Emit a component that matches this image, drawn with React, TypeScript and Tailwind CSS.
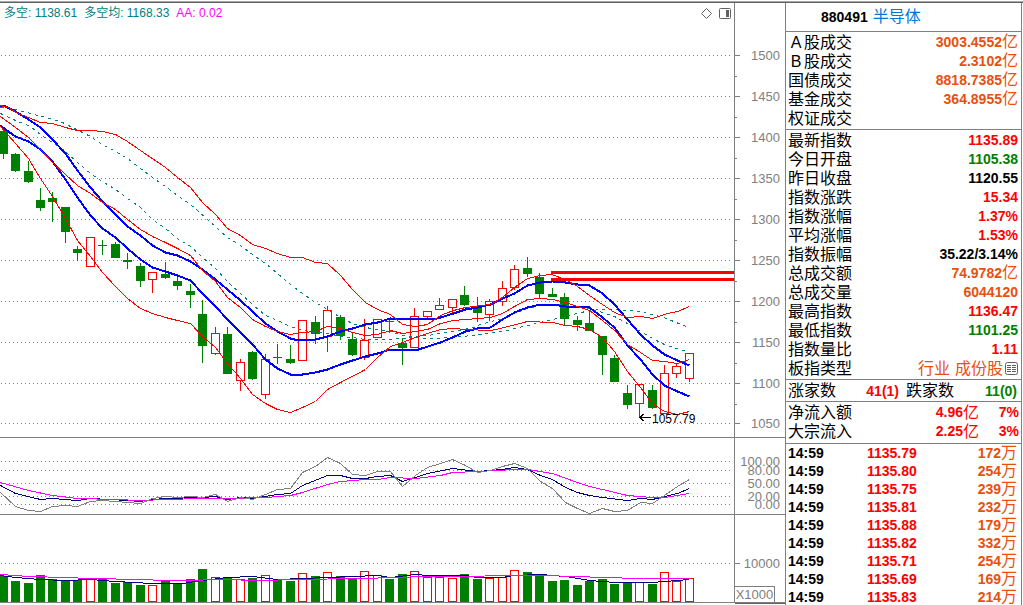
import React from 'react';

type Bar = [up: 0 | 1, high: number, top: number, bottom: number, low: number, volume: number];

// one entry per trading day, y positions on the chart
const bars: Bar[] = [
  [0, 128, 131, 154, 159, 576],
  [0, 153, 154, 171, 172, 581],
  [0, 161, 171, 182, 183, 583],
  [0, 188, 200, 208, 211, 575],
  [0, 192, 198, 202, 222, 579],
  [0, 207, 207, 232, 243, 580],
  [0, 246, 249, 253, 261, 580],
  [1, 237, 237, 267, 267, 579],
  [0, 240, 245, 246, 255, 579],
  [0, 242, 244, 258, 258, 583],
  [0, 253, 260, 262, 269, 582],
  [0, 263, 266, 281, 287, 585],
  [1, 272, 272, 280, 293, 585],
  [0, 262, 274, 278, 279, 580],
  [0, 277, 281, 286, 290, 583],
  [0, 284, 291, 295, 308, 579],
  [0, 300, 314, 346, 363, 569],
  [1, 327, 333, 354, 355, 577],
  [0, 327, 334, 374, 374, 578],
  [1, 359, 362, 381, 391, 579],
  [0, 351, 352, 379, 380, 578],
  [1, 354, 359, 395, 399, 575],
  [0, 344, 357, 358, 364, 580],
  [0, 345, 359, 363, 364, 581],
  [1, 320, 320, 361, 361, 573],
  [0, 316, 322, 334, 344, 576],
  [1, 306, 310, 337, 352, 572],
  [0, 315, 317, 336, 340, 576],
  [0, 333, 339, 355, 356, 579],
  [1, 319, 340, 358, 360, 571],
  [1, 319, 319, 338, 338, 575],
  [0, 319, 321, 322, 333, 579],
  [0, 338, 343, 348, 365, 574],
  [1, 308, 316, 348, 348, 571],
  [1, 311, 311, 317, 320, 577],
  [1, 298, 305, 310, 310, 577],
  [1, 299, 299, 308, 315, 578],
  [0, 286, 295, 305, 306, 574],
  [0, 297, 307, 313, 322, 579],
  [1, 299, 301, 315, 321, 578],
  [1, 281, 288, 302, 306, 577],
  [1, 265, 269, 288, 290, 570],
  [0, 257, 268, 274, 277, 572],
  [0, 273, 277, 294, 298, 576],
  [0, 288, 294, 297, 297, 581],
  [0, 293, 297, 319, 325, 580],
  [0, 316, 320, 325, 331, 585],
  [0, 310, 323, 331, 331, 581],
  [0, 336, 336, 355, 375, 579],
  [0, 355, 358, 382, 382, 584],
  [0, 385, 393, 405, 409, 583],
  [1, 384, 384, 404, 417, 582],
  [0, 385, 390, 408, 409, 584],
  [1, 365, 373, 414, 414, 572],
  [1, 363, 366, 374, 378, 581],
  [1, 353, 353, 379, 382, 578],
];

const barX = (i: number) => Math.floor(3.07 + i * 12.48);

const RED = '#ff0000';
const GREEN = '#008000';
const GRAY = '#808080';
const TEAL = '#008080';
const BLUE = '#0000ff';
const NAVY = '#000080';
const MAGENTA = '#ff00ff';

interface LineData {
  color: string;
  width?: number;
  dash?: string;
  points: string;
}

const priceLines: LineData[] = [
  {
    color: TEAL,
    dash: '3 4',
    points:
      '0,107 15,109 30,113 45,117 60,121 78,130 90,136 102,144 115,151 127,158 140,168 152,177 165,186 177,195 190,204 205,217 227,237 240,245 252,254 265,263 277,273 290,284 302,293 315,302 327,309 340,317 352,323 365,327 377,329 390,331 402,335 415,337 430,338 453,337 480,334 502,331 527,325 552,319 577,313 589,310 602,309 633,310 640,311 663,317 686,326',
  },
  {
    color: TEAL,
    dash: '3 4',
    points:
      '0,113 15,120 30,126 40,134 55,144 65,151 78,163 90,173 102,181 115,189 127,198 140,207 152,219 165,228 177,238 190,246 202,257 215,268 227,281 240,293 252,304 265,315 277,320 290,326 302,330 315,332 327,333 340,336 352,337 365,339 390,339 402,338 427,335 453,331 473,327 480,324 502,318 514,313 527,308 540,305 552,304 577,305 589,308 602,312 614,316 627,323 640,331 652,338 664,344 686,351',
  },
  {
    color: BLUE,
    width: 2,
    points:
      '0,105 5,106 15,111 28,119 40,127 52,139 65,153 77,170 90,187 102,201 115,214 127,226 140,235 152,245 165,252 177,255 190,261 202,269 215,279 227,289 240,300 252,311 265,323 277,331 290,338 298,340 315,339 327,336 340,331 352,328 365,324 377,322 390,318 433,319 440,317 453,313 465,309 477,307 490,304 500,299 514,293 527,285 540,282 552,281 565,282 577,284 589,285 602,293 614,304 627,319 640,334 652,345 664,354 677,360 689,365',
  },
  {
    color: BLUE,
    width: 2,
    points:
      '0,125 5,129 15,136 28,141 40,149 52,161 65,179 77,197 90,215 102,228 115,237 127,248 140,259 152,267 165,271 177,275 190,280 202,293 215,306 227,319 240,332 252,344 265,359 277,368 290,374 302,374 315,372 327,369 340,364 352,360 365,356 377,353 390,349 418,349 440,342 452,337 465,331 477,328 490,327 502,319 514,312 527,307 540,304 552,304 565,306 589,307 602,317 614,327 627,345 640,359 652,374 664,385 677,391 689,396',
  },
  {
    color: RED,
    points:
      '0,105 8,107 15,112 28,117 40,122 52,123 65,127 77,130 90,130 102,131 115,134 127,141 140,150 165,167 177,177 190,187 202,202 215,214 227,228 240,235 252,244 265,248 277,253 290,257 302,257 315,262 327,263 340,275 352,289 365,302 377,309 390,314 402,324 415,326 427,324 440,315 453,310 465,307 490,304 502,297 514,287 527,278 540,275 551,274 565,279 577,286 589,295 602,304 614,312 627,317 640,316 652,318 667,313 677,311 689,306',
  },
  {
    color: RED,
    points:
      '0,116 15,127 28,137 40,149 52,162 65,174 77,185 90,193 102,202 115,209 127,219 140,229 152,236 165,242 177,248 190,255 202,270 215,281 227,297 240,307 252,319 265,326 277,331 290,334 302,332 315,331 327,326 340,328 352,332 365,335 377,334 390,330 402,333 427,329 440,323 453,320 465,319 490,317 502,313 514,306 527,299 540,298 552,299 565,302 577,306 589,310 602,320 614,330 627,344 640,352 652,360 664,361 677,363 689,359',
  },
  {
    color: RED,
    points:
      '0,126 15,143 28,158 40,178 52,196 65,218 77,240 90,256 102,272 115,286 127,298 140,308 152,313 165,317 177,320 190,323 202,336 215,347 227,363 240,378 252,394 265,403 277,409 290,412 302,407 315,401 327,389 340,382 365,369 377,357 390,346 402,342 415,337 427,333 440,329 453,328 465,329 490,330 500,328 527,321 552,322 565,325 577,326 589,329 602,337 614,351 627,371 640,387 652,403 664,411 677,414 689,411',
  },
];

const indicatorLines: LineData[] = [
  {
    color: NAVY,
    points:
      '0,485 15,493 40,499 52,498 77,500 90,498 127,500 140,501 152,499 165,498 202,497 215,496 227,499 240,497 252,498 265,496 277,494 290,493 302,485 327,475 340,475 352,478 365,478 377,476 390,475 402,481 415,477 427,473 452,468 477,471 502,469 514,467 527,469 540,475 552,479 565,487 577,492 589,495 602,497 627,500 640,498 652,499 664,496 677,493 689,488',
  },
  {
    color: MAGENTA,
    points:
      '0,482 28,490 52,495 77,498 115,499 140,500 165,499 202,498 227,498 265,497 290,495 302,492 327,484 340,481 365,479 377,479 390,477 415,478 440,475 452,472 477,471 514,469 527,469 552,473 577,482 589,486 602,489 627,495 652,497 664,497 677,495 689,493',
  },
  {
    color: GRAY,
    points:
      '0,492 15,506 28,510 40,511 52,506 65,505 77,506 90,501 102,500 115,501 127,502 140,503 152,498 165,496 177,497 190,496 202,497 215,494 227,501 240,497 252,499 265,494 277,489 290,488 302,472 315,466 327,457 340,463 352,474 365,475 377,471 390,471 402,486 415,475 427,467 440,463 452,459 465,465 477,472 490,470 502,466 514,463 527,468 540,481 552,488 565,502 577,508 589,513 602,508 614,511 627,510 640,502 652,503 664,495 677,486 689,479',
  },
];

const volumeLines: LineData[] = [
  {
    color: NAVY,
    points:
      '0,575 15,577 40,579 65,580 90,579 115,581 152,583 182,583 202,580 227,577 252,576 277,579 302,578 327,577 352,576 377,575 390,577 415,574 427,575 465,575 477,577 502,577 514,575 540,574 565,576 577,578 589,580 602,581 614,582 652,582 664,581 689,579',
  },
  {
    color: MAGENTA,
    points:
      '0,574 28,576 65,577 90,578 140,579 165,580 190,580 215,579 265,580 290,579 365,578 390,577 430,576 540,575 577,576 602,577 640,578 689,578',
  },
];

const priceAxis = [
  { y: 55, label: '1500' },
  { y: 96, label: '1450' },
  { y: 137, label: '1400' },
  { y: 178, label: '1350' },
  { y: 219, label: '1300' },
  { y: 260, label: '1250' },
  { y: 301, label: '1200' },
  { y: 342, label: '1150' },
  { y: 383, label: '1100' },
  { y: 423, label: '1050' },
];

const indicatorAxis = [
  { y: 461, label: '100.00' },
  { y: 470, label: '80.00' },
  { y: 483, label: '50.00' },
  { y: 496, label: '20.00' },
  { y: 504, label: '0.00' },
];

const volumeAxis = [{ y: 563, label: '10000' }];

const turnover = [
  { label: 'A股成交', value: '3003.4552', unit: '亿', color: 'text-[#e8500c]' },
  { label: 'B股成交', value: '2.3102', unit: '亿', color: 'text-[#e8500c]' },
  { label: '国债成交', value: '8818.7385', unit: '亿', color: 'text-[#e8500c]' },
  { label: '基金成交', value: '364.8955', unit: '亿', color: 'text-[#e8500c]' },
  { label: '权证成交', value: '', unit: '', color: 'text-[#e8500c]' },
];

const quotes = [
  { label: '最新指数', value: '1135.89', unit: '', color: 'text-[#ff0000]' },
  { label: '今日开盘', value: '1105.38', unit: '', color: 'text-[#008000]' },
  { label: '昨日收盘', value: '1120.55', unit: '', color: 'text-black' },
  { label: '指数涨跌', value: '15.34', unit: '', color: 'text-[#ff0000]' },
  { label: '指数涨幅', value: '1.37%', unit: '', color: 'text-[#ff0000]' },
  { label: '平均涨幅', value: '1.53%', unit: '', color: 'text-[#ff0000]' },
  { label: '指数振幅', value: '35.22/3.14%', unit: '', color: 'text-black' },
  { label: '总成交额', value: '74.9782', unit: '亿', color: 'text-[#e8500c]' },
  { label: '总成交量', value: '6044120', unit: '', color: 'text-[#e8500c]' },
  { label: '最高指数', value: '1136.47', unit: '', color: 'text-[#ff0000]' },
  { label: '最低指数', value: '1101.25', unit: '', color: 'text-[#008000]' },
  { label: '指数量比', value: '1.11', unit: '', color: 'text-[#ff0000]' },
];

const flows = [
  { label: '净流入额', value: '4.96', percent: '7%' },
  { label: '大宗流入', value: '2.25', percent: '3%' },
];

const trades = [
  { price: '1135.79', volume: 172 },
  { price: '1135.80', volume: 254 },
  { price: '1135.75', volume: 239 },
  { price: '1135.81', volume: 232 },
  { price: '1135.88', volume: 179 },
  { price: '1135.82', volume: 332 },
  { price: '1135.71', volume: 254 },
  { price: '1135.69', volume: 169 },
  { price: '1135.83', volume: 214 },
];

const Lines: React.FC<{ lines: LineData[] }> = ({ lines }) => (
  <g transform="translate(0.5 0.5)" fill="none">
    {lines.map((line, index) => (
      <polyline
        key={index}
        points={line.points}
        stroke={line.color}
        strokeWidth={line.width ?? 1}
        strokeDasharray={line.dash}
      />
    ))}
  </g>
);

const GridLines: React.FC<{ rows: { y: number }[] }> = ({ rows }) => (
  <>
    {rows.map(({ y }) => (
      <line
        key={y}
        x1="1"
        x2="99.6%"
        y1={y + 0.5}
        y2={y + 0.5}
        stroke={GRAY}
        strokeDasharray="1 3"
      />
    ))}
  </>
);

interface AxisProps {
  top: number;
  rows: { y: number; label: string }[];
  ticks?: boolean;
  minor?: boolean;
}

const Axis: React.FC<AxisProps> = ({ top, rows, ticks, minor }) => (
  <svg className="h-full w-full" shapeRendering="crispEdges">
    <g transform={`translate(0 ${-top})`}>
      {rows.map(({ y, label }) => (
        <g key={label}>
          {ticks && <rect x="0" y={y} width="5" height="1" fill={GRAY} />}
          {minor && <rect x="0" y={y + 21} width="2" height="1" fill={GRAY} />}
          <text x="45" y={y + 5} textAnchor="end" fill={GRAY} className="text-[13px]">
            {label}
          </text>
        </g>
      ))}
    </g>
  </svg>
);

const Candles: React.FC = () => (
  <>
    {bars.map(([up, high, top, bottom, low], i) => {
      const x = barX(i);
      const color = up ? RED : GREEN;
      return (
        <g key={i}>
          <rect x={x} y={high} width="1" height={low - high} fill={color} />
          {up ? (
            <rect
              x={x - 3.5}
              y={top + 0.5}
              width="8"
              height={bottom - top - 1}
              fill="white"
              stroke={RED}
            />
          ) : (
            <rect x={x - 4} y={top} width="9" height={bottom - top} fill={GREEN} />
          )}
        </g>
      );
    })}
  </>
);

const VolumeBars: React.FC = () => (
  <>
    {bars.map(([up, , , , , volume], i) => {
      const x = barX(i);
      return up ? (
        <rect
          key={i}
          x={x - 3.5}
          y={volume + 0.5}
          width="8"
          height={601 - volume}
          fill="white"
          stroke={RED}
        />
      ) : (
        <rect key={i} x={x - 4} y={volume} width="9" height={602 - volume} fill={GREEN} />
      );
    })}
  </>
);

const PricePane: React.FC = () => (
  <section className="flex border-b border-[#808080]">
    <div className="min-w-0 flex-1">
      <header className="flex h-5 items-center justify-between pr-[3px] pl-1 text-xs">
        <div className="flex gap-[7px] whitespace-nowrap text-[#008080]">
          <span>多空: 1138.61</span>
          <span>多空均: 1168.33</span>
          <span className="text-[#ff00ff]">AA: 0.02</span>
        </div>
        <div className="flex items-center gap-[7px]">
          <button type="button" aria-label="marker">
            <svg width="11" height="11" viewBox="0 0 11 11" fill="none" stroke="#606060">
              <path d="M5.5 0.5 L10.5 5.5 L5.5 10.5 L0.5 5.5 Z" />
            </svg>
          </button>
          <button type="button" aria-label="side panel">
            <svg width="12" height="11" viewBox="0 0 12 11">
              <rect x="0.5" y="0.5" width="11" height="10" rx="1" fill="none" stroke="#606060" />
              <rect x="7" y="2" width="3" height="7" fill="#606060" />
            </svg>
          </button>
        </div>
      </header>
      <svg className="h-[414px] w-full" shapeRendering="crispEdges">
        <g transform="translate(0 -23)">
          <GridLines rows={priceAxis} />
          <Candles />
          <Lines lines={priceLines} />
          <line x1="551" x2="100%" y1="272.5" y2="272.5" stroke={RED} strokeWidth="3" />
          <line x1="551" x2="100%" y1="279.5" y2="279.5" stroke={RED} strokeWidth="3" />
          <path d="M651 417.5 H640 M643.5 414 L640 417.5 L643.5 421" fill="none" stroke="black" />
          <text x="652" y="423" className="text-xs">
            1057.79
          </text>
        </g>
      </svg>
    </div>
    <div className="w-[51px] border-l border-[#808080]">
      <Axis top={3} rows={priceAxis} ticks minor />
    </div>
  </section>
);

const IndicatorPane: React.FC = () => (
  <section className="flex h-[77px] border-b border-[#808080]">
    <svg className="h-full min-w-0 flex-1" shapeRendering="crispEdges">
      <g transform="translate(0 -438)">
        <GridLines rows={indicatorAxis} />
        <Lines lines={indicatorLines} />
      </g>
    </svg>
    <div className="w-[51px] border-l border-[#808080]">
      <Axis top={438} rows={indicatorAxis} />
    </div>
  </section>
);

const VolumePane: React.FC = () => (
  <section className="flex h-[88px] border-b border-[#808080]">
    <svg className="h-full min-w-0 flex-1" shapeRendering="crispEdges">
      <g transform="translate(0 -515)">
        <GridLines rows={volumeAxis} />
        <VolumeBars />
        <Lines lines={volumeLines} />
      </g>
    </svg>
    <div className="flex w-[51px] flex-col items-start border-l border-[#808080]">
      <div className="min-h-0 w-full flex-1">
        <Axis top={515} rows={volumeAxis} ticks />
      </div>
      <span className="h-4 w-10 border-t border-r border-[#808080] text-center text-[13px] leading-[15px] text-[#808080]">
        X1000
      </span>
    </div>
  </section>
);

interface QuoteRowProps {
  label: string;
  children?: React.ReactNode;
}

const QuoteRow: React.FC<QuoteRowProps> = ({ label, children }) => (
  <tr className="h-[19px]">
    <th scope="row" className="p-0 text-left text-base leading-[19px] font-normal">
      {/^[AB]/.test(label) ? (
        <>
          <span className="inline-block w-4 text-center">{label[0]}</span>
          {label.slice(1)}
        </>
      ) : (
        label
      )}
    </th>
    <td className="p-0 text-right leading-[19px]">{children}</td>
  </tr>
);

const Unit: React.FC<{ children: React.ReactNode }> = ({ children }) => (
  <span className="text-base leading-none font-normal">{children}</span>
);

const QuoteTable: React.FC<{ rows: typeof quotes; children?: React.ReactNode }> = ({
  rows,
  children,
}) => (
  <table className="w-full">
    <tbody>
      {rows.map((row) => (
        <QuoteRow key={row.label} label={row.label}>
          <span className={`font-bold ${row.color}`}>
            {row.value}
            {row.unit && <Unit>{row.unit}</Unit>}
          </span>
        </QuoteRow>
      ))}
      {children}
    </tbody>
  </table>
);

const SidePanel: React.FC = () => (
  <aside className="mr-px w-[237px] shrink-0 border-x border-[#808080] text-sm whitespace-nowrap">
    <h1 className="flex h-[29px] items-center gap-[5px] border-b border-[#808080] pl-[35px]">
      <span className="font-bold">880491</span>
      <span className="text-base leading-none text-[#0078d7]">半导体</span>
    </h1>
    <div className="border-b border-[#808080] py-px pr-[3px] pl-[2px]">
      <QuoteTable rows={turnover} />
    </div>
    <div className="border-b border-[#808080] py-px pr-[3px] pl-[2px]">
      <QuoteTable rows={quotes}>
        <QuoteRow label="板指类型">
          <span className="flex items-center justify-end gap-[5px] text-base leading-[19px] text-[#e8500c]">
            <a href="#industry">行业</a>
            <a href="#members" className="flex items-center gap-[2px]">
              成份股
              <svg width="13" height="13" viewBox="0 0 13 13" fill="none" stroke="#606060">
                <rect x="0.5" y="0.5" width="12" height="12" rx="2" />
                <path d="M2 3.5 H6 M7 3.5 H11 M2 5.5 H6 M7 5.5 H11 M2 7.5 H6 M7 7.5 H11 M2 9.5 H6 M7 9.5 H11" />
              </svg>
            </a>
          </span>
        </QuoteRow>
      </QuoteTable>
    </div>
    <div className="flex h-[22px] items-center border-b border-[#808080] pr-[4px] pl-[2px]">
      <span className="text-base leading-none">涨家数</span>
      <span className="w-[63px] text-right font-bold text-[#ff0000]">41(1)</span>
      <span className="ml-[7px] text-base leading-none">跌家数</span>
      <span className="ml-auto font-bold text-[#008000]">11(0)</span>
    </div>
    <div className="border-b border-[#808080] pt-px pr-[2px] pb-[2px] pl-[2px]">
      <table className="w-full">
        <tbody>
          {flows.map((flow) => (
            <QuoteRow key={flow.label} label={flow.label}>
              <span className="flex items-center justify-end font-bold text-[#ff0000]">
                {flow.value}
                <Unit>亿</Unit>
                <span className="w-10">{flow.percent}</span>
              </span>
            </QuoteRow>
          ))}
        </tbody>
      </table>
    </div>
    <table className="w-full table-fixed">
      <tbody>
        {trades.map((trade) => (
          <tr key={trade.price} className="h-[18px] font-bold">
            <td className="w-[81px] p-0 pl-[2px] leading-[18px]">14:59</td>
            <td className="p-0 leading-[18px] text-[#ff0000]">{trade.price}</td>
            <td className="p-0 pr-[4px] text-right leading-[18px] text-[#e8500c]">
              {trade.volume}
              <Unit>万</Unit>
            </td>
          </tr>
        ))}
      </tbody>
    </table>
  </aside>
);

const App: React.FC = () => {
  return (
    <div className="flex h-screen flex-col overflow-hidden bg-white font-['Liberation_Sans','Noto_Sans_CJK_SC',sans-serif] text-black">
      <div className="mt-px h-[2px] shrink-0 border-t border-b border-t-[#a8a8a8] border-b-[#606060]" />
      <div className="flex min-h-0 flex-1">
        <main className="flex min-w-0 flex-1 flex-col">
          <PricePane />
          <IndicatorPane />
          <VolumePane />
          <div className="ml-auto h-px w-[50px] bg-[#606060]" />
        </main>
        <SidePanel />
      </div>
    </div>
  );
};

export default App;
